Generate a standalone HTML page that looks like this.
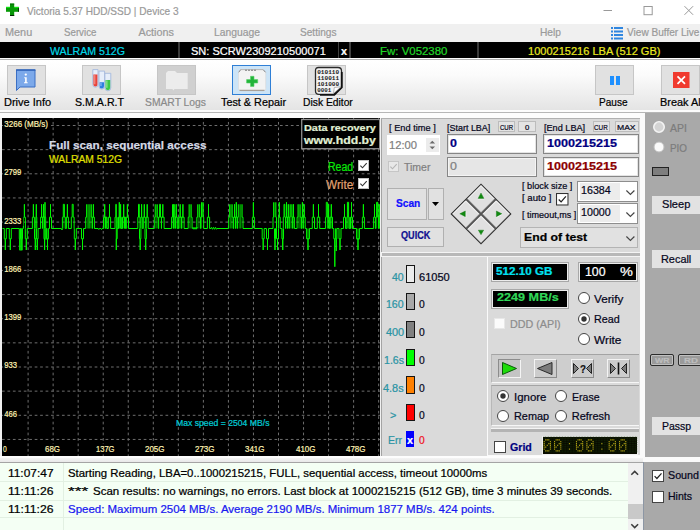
<!DOCTYPE html>
<html>
<head>
<meta charset="utf-8">
<title>Victoria 5.37 HDD/SSD | Device 3</title>
<style>
*{box-sizing:border-box;margin:0;padding:0}
html,body{width:700px;height:530px;overflow:hidden;background:#f0f0f0}
body{position:relative;font-family:"Liberation Sans",sans-serif;font-size:11px;color:#000}
.a{position:absolute}
.t{position:absolute;white-space:nowrap;line-height:1;transform-origin:0 0;-webkit-text-stroke:.22px}
.tb{position:absolute;top:65px;width:38.800px;height:29.800px;background:#e1e1e1;border:1px solid #c6c6c6}
.pn{position:absolute;background:#dadada}
.btn{position:absolute;background:#e1e1e1;border:1px solid #b2b2b2}
.inp{position:absolute;background:#fff;border:1px solid #7a7a7a}
.rad{position:absolute;width:12px;height:12px;border-radius:50%;background:#fff;border:1px solid #4a4a4a}
.rad.on:after{content:"";position:absolute;left:2.500px;top:2.500px;width:5px;height:5px;border-radius:50%;background:#333}
.chk{position:absolute;width:12px;height:12px;background:#fff;border:1px solid #444}
.lg{position:absolute;left:406px;width:9px;height:17px;border:1px solid #111}
.dsp{position:absolute;background:#000;border:1px solid #f0f0f0;outline:1px solid #9c9c9c}
.sb{position:absolute;left:651px;width:60px;height:18px;background:#e1e1e1}
</style>
</head>
<body>
<!-- TITLE BAR -->
<div class="a" style="left:0;top:0;width:700px;height:24px;background:#fff"></div>
<svg class="a" style="left:0;top:0" width="24" height="20"><rect x="10" y="3.600" width="4.200" height="12.300" fill="#079407"/><rect x="6" y="6.900" width="12.900" height="4.900" fill="#089a08"/><rect x="6" y="6.900" width="4" height="1.100" fill="#10e410"/><rect x="14.200" y="6.900" width="4.700" height="1.100" fill="#10e410"/><rect x="10" y="3.600" width="4.200" height="1" fill="#067006"/><rect x="10" y="15" width="4.200" height=".9" fill="#001a00"/><rect x="18.100" y="8" width=".8" height="3.800" fill="#002400"/></svg>
<svg class="a" style="left:601.500px;top:4.800px" width="12" height="12"><path d="M1.500 5.500h8.500" stroke="#999" stroke-width="1"/></svg>
<svg class="a" style="left:641.500px;top:4.500px" width="12" height="12"><rect x="2" y="1.500" width="8.200" height="8.200" fill="none" stroke="#999"/></svg>
<svg class="a" style="left:683px;top:4.500px" width="12" height="12"><path d="M1.500 1.200l8.600 8.600M10.100 1.200l-8.600 8.600" stroke="#999" stroke-width="1"/></svg>
<!-- MENU -->
<div class="a" style="left:0;top:24px;width:700px;height:18px;background:#f0f0f0"></div>
<svg class="a" style="left:611px;top:27px" width="12" height="13"><g fill="#2f86e0"><rect x="0" y="0" width="2" height="2"/><rect x="3" y="0" width="9" height="2"/><rect x="0" y="3.500" width="2" height="2"/><rect x="3" y="3.500" width="9" height="2"/><rect x="0" y="7" width="2" height="2"/><rect x="3" y="7" width="9" height="2"/><rect x="0" y="10.500" width="2" height="2"/><rect x="3" y="10.500" width="9" height="2"/></g></svg>
<!-- INFO BAR -->
<div class="a" style="left:0;top:42.300px;width:700px;height:15.500px;background:#000"></div>
<div class="a" style="left:178px;top:42px;width:2px;height:16px;background:#3a3a3a"></div>
<div class="a" style="left:337.600px;top:42px;width:1.500px;height:16px;background:#404040"></div>
<div class="a" style="left:349.300px;top:42px;width:1.500px;height:16px;background:#404040"></div>
<div class="a" style="left:477px;top:42px;width:2px;height:16px;background:#3a3a3a"></div>
<!-- TOOLBAR -->
<div class="a" style="left:0;top:58px;width:700px;height:60px;background:#fcfcfc"></div>
<div class="a" style="left:0;top:59.200px;width:700px;height:1px;background:#b4b4b4"></div>
<div class="a" style="left:0;top:60.200px;width:700px;height:50.300px;background:linear-gradient(#ffffff,#fbfbfb 30%,#e4e4e4)"></div>
<div class="a" style="left:0;top:111.900px;width:700px;height:1px;background:#b6b6b6"></div>
<div class="tb" style="left:7px"></div>
<div class="tb" style="left:82px"></div>
<div class="tb" style="left:157px;background:#d0d0d0"></div>
<div class="tb" style="left:232px;background:#cce4f7;border:1.500px solid #2f7fd6"></div>
<div class="tb" style="left:307px"></div>
<div class="tb" style="left:595px"></div>
<div class="tb" style="left:661px"></div>

<!-- GRAPH -->
<div class="a" id="graph" style="left:2.400px;top:118.300px;width:377.300px;height:337.500px;background:#000;overflow:hidden">
  <svg class="a" style="left:-0.400px;top:-0.300px" width="378" height="338" id="gsvg"><path d="M0 7.50H378M0 31.65H378M0 55.80H378M0 79.95H378M0 104.10H378M0 128.25H378M0 152.40H378M0 176.55H378M0 200.70H378M0 224.85H378M0 249.00H378M0 273.15H378M0 297.30H378M0 321.45H378" stroke="#6e6e6e" stroke-width="1" stroke-dasharray="2.7 2.75" fill="none"/>
<path d="M26.10 0V338M51.14 0V338M76.18 0V338M101.22 0V338M126.26 0V338M151.30 0V338M176.34 0V338M201.38 0V338M226.42 0V338M251.46 0V338M276.50 0V338M301.54 0V338M326.58 0V338M351.62 0V338M376.66 0V338" stroke="#6e6e6e" stroke-width="1" stroke-dasharray="2.7 2.75" stroke-dashoffset="1.5" fill="none"/>
<rect x="17.40" y="110.50" width="3.00" height="22.50" fill="#00c800" opacity="0.6"/>
<rect x="41.80" y="110.50" width="4.50" height="11.50" fill="#00c800" opacity="0.5"/>
<rect x="61.30" y="86.30" width="1.10" height="24.20" fill="#00c800" opacity="0.5"/>
<rect x="84.60" y="86.30" width="4.70" height="24.20" fill="#00c800" opacity="0.385"/>
<rect x="101.50" y="99.20" width="3.50" height="11.30" fill="#00c800" opacity="0.5"/>
<rect x="114.80" y="99.20" width="2.20" height="11.30" fill="#00c800" opacity="0.9"/>
<rect x="118.00" y="99.20" width="5.50" height="11.30" fill="#00c800" opacity="0.5"/>
<rect x="153.20" y="86.30" width="2.10" height="24.20" fill="#00c800" opacity="0.55"/>
<rect x="157.60" y="86.30" width="0.90" height="12.90" fill="#00c800" opacity="0.9"/>
<rect x="170.50" y="86.30" width="2.30" height="24.20" fill="#00c800" opacity="0.385"/>
<rect x="176.50" y="99.20" width="3.50" height="11.30" fill="#00c800" opacity="0.5"/>
<rect x="187.10" y="86.30" width="2.10" height="24.20" fill="#00c800" opacity="0.5"/>
<rect x="195.70" y="86.30" width="2.00" height="24.20" fill="#00c800" opacity="0.45"/>
<rect x="199.50" y="84.30" width="1.70" height="14.90" fill="#00c800" opacity="0.8"/>
<rect x="227.60" y="86.30" width="2.60" height="24.20" fill="#00c800" opacity="0.35"/>
<rect x="236.30" y="86.30" width="3.80" height="24.20" fill="#00c800" opacity="0.35"/>
<rect x="271.60" y="84.30" width="2.30" height="14.90" fill="#00c800" opacity="0.55"/>
<rect x="280.00" y="110.50" width="1.40" height="21.50" fill="#00c800" opacity="0.4"/>
<rect x="288.10" y="86.30" width="1.90" height="24.20" fill="#00c800" opacity="0.5"/>
<rect x="296.00" y="86.30" width="2.20" height="24.20" fill="#00c800" opacity="0.5"/>
<rect x="304.60" y="110.50" width="2.90" height="10.30" fill="#00c800" opacity="0.55"/>
<rect x="327.30" y="99.20" width="3.10" height="11.30" fill="#00c800" opacity="0.6"/>
<rect x="345.40" y="84.30" width="1.20" height="26.20" fill="#00c800" opacity="0.9"/>
<rect x="346.80" y="99.20" width="3.60" height="11.30" fill="#00c800" opacity="0.55"/>
<rect x="354.60" y="110.50" width="2.80" height="11.50" fill="#00c800" opacity="0.55"/>
<rect x="374.60" y="84.30" width="1.20" height="14.90" fill="#00c800" opacity="0.9"/>
<path d="M86.17 86.30V110.50M87.73 86.30V110.50M228.90 86.30V110.50M238.20 86.30V110.50" stroke="#00f000" stroke-width=".8" fill="none" opacity=".75"/>
<path d="M0.50 110.50H2.30V120.80H3.30V132.00V120.80H4.30V110.50H7.30V120.80H8.30V132.00V120.80H9.30V110.50H17.30V120.80H17.90V132.00V120.80H18.50V110.50H19.30V120.80H19.90V132.00V120.80H20.50V110.50H21.40V99.20H22.40V86.30V99.20H23.40V110.50M23.30 110.50V120.80H24.30V132.00V120.80H25.30V110.50H30.40V99.20H31.40V86.30V99.20H32.40V110.50H32.50V120.80H33.30V132.00V120.80H34.10V110.50M33.80 110.50V99.20H34.30V86.30V99.20H34.80V110.50M34.50 110.50V120.80H35.30V132.00V120.80H36.10V110.50H38.60V99.20H39.60V86.30V99.20H40.60V110.50H40.70V99.20H41.50V86.30V99.20H42.30V110.50M42.00 110.50V120.80H42.60V132.00V120.80H43.20V110.50M42.30 110.50V99.20H43.00V84.30V99.20H43.70V110.50H44.60V120.80H45.50V132.00V120.80H46.40V110.50H47.50V99.20H48.50V86.30V99.20H49.50V110.50H59.40L60.00 112.00L60.60 110.50M60.40 110.50V99.20H61.30V86.30H62.40V99.20H63.30V110.50H64.40V99.20H65.40V86.30V99.20H66.40V110.50H69.30V99.20H70.20V86.30H71.20V99.20H72.10V110.50H72.30V120.80H73.30V132.00V120.80H74.30V110.50H79.50V120.80H80.50V132.00V120.80H81.50V110.50H83.70V99.20H84.60V86.30M89.30 86.30V99.20H90.20V110.50H90.40V99.20H91.40V86.30V99.20H92.40V110.50H96.20L96.80 111.50L97.40 110.50H98.90L99.50 111.50L100.10 110.50H101.50V99.20H102.70V86.30V99.20H103.90V110.50M103.60 110.50V99.20H104.30V99.20V99.20H105.00V110.50H106.40V99.20H107.50V86.30V99.20H108.60V110.50H113.00V99.20H113.80V86.30H114.30V132.00V120.80H115.20V110.50H116.50V99.20H117.30V84.30V99.20H118.10V110.50M118.00 110.50V99.20H118.60V86.30V99.20H119.20V110.50H120.50V99.20H121.70V86.30V99.20H122.90V110.50M122.70 110.50V99.20H123.20V99.20V99.20H123.70V110.50H124.30V99.20H125.40V86.30V99.20H126.50V110.50H135.80V99.20H136.50V86.30H137.30V99.20H138.00V110.50M137.50 110.50V120.80H138.20V132.00V120.80H138.90V110.50H138.90V99.20H139.60V86.30V99.20H140.30V110.50H141.30V99.20H142.30V86.30V99.20H143.30V110.50M143.00 110.50V120.80H143.70V132.00V120.80H144.40V110.50M144.20 110.50V99.20H145.20V86.30V99.20H146.20V110.50H152.30V99.20H153.20V86.30M155.30 86.30V99.20H156.20V110.50H156.70V99.20H157.60V86.30H158.50V99.20H159.40V110.50H159.50V99.20H160.80V86.30V99.20H162.10V110.50H169.60V99.20H170.50V86.30M172.80 86.30V99.20H173.70V110.50M171.40 110.50V99.20H171.70V86.30V99.20H172.00V110.50M173.30 110.50V99.20H174.30V86.30V99.20H175.30V110.50H176.70V99.20H178.20V86.30V99.20H179.70V110.50H179.70V99.20H180.90V86.30V99.20H182.10V110.50H186.20V99.20H187.10V86.30M189.20 86.30V99.20H190.10V110.50H190.50L191.00 109.30L192.00 111.30L193.00 109.30L194.00 111.30L195.00 109.30L195.00 110.50M194.80 110.50V99.20H195.70V86.30M197.70 86.30V99.20H198.60V110.50H199.00V99.20H199.50V84.30M201.20 84.30V99.20H201.70V110.50H205.40V99.20H206.50V86.30V99.20H207.60V110.50H209.00L209.50 109.30L210.50 111.30L211.50 109.30L212.50 111.30L213.50 109.30L214.50 111.30L215.00 110.50H226.70V99.20H227.60V86.30M230.20 86.30V99.20H231.10V110.50H231.60V99.20H232.50V86.30V99.20H233.40V110.50H233.50V99.20H234.30V84.30V99.20H235.10V110.50H235.40V99.20H236.30V86.30M240.10 86.30V99.20H241.00V110.50H250.40V99.20H251.40V84.30V99.20H252.40V110.50H260.20V120.80H261.20V132.00V120.80H262.20V110.50H264.50V120.80H265.50V132.00V120.80H266.50V110.50H271.00V99.20H271.60V84.30M273.90 84.30V99.20H274.50V110.50M272.50 110.50V120.80H273.00V132.00V120.80H273.50V110.50H274.50V120.80H275.50V132.00V120.80H276.50V110.50M276.40 110.50V99.20H277.30V84.30V99.20H278.20V110.50H279.90V120.80H280.70V132.00V120.80H281.50V110.50M281.30 110.50V99.20H282.00V86.30H282.80V99.20H283.50V110.50H283.70V99.20H284.50V84.30V99.20H285.30V110.50H285.50V99.20H286.30V86.30V99.20H287.10V110.50H287.20V99.20H288.10V86.30M290.00 86.30V99.20H290.90V110.50M290.60 110.50V99.20H291.50V86.30V99.20H292.40V110.50H295.10V99.20H296.00V86.30M298.20 86.30V99.20H299.10V110.50H299.60V99.20H300.40V84.30V99.20H301.20V110.50H301.20V99.20H302.20V86.30V99.20H303.20V110.50H304.60V120.80H306.00V132.00V120.80H307.40V110.50H310.30V99.20H311.40V86.30V99.20H312.50V110.50H315.30V99.20H316.50V86.30V99.20H317.70V110.50H323.60V99.20H324.30V84.30H325.40V99.20H326.10V110.50M325.90 110.50V99.20H326.60V86.30V99.20H327.30V110.50H328.10V99.20H329.30V86.30V99.20H330.50V110.50H331.80V120.80H332.80V148.70V120.80H333.80V110.50M333.70 110.50V120.80H334.30V133.00V120.80H334.90V110.50H337.00V120.80H338.00V132.00V120.80H339.00V110.50H341.50V99.20H342.50V86.30V99.20H343.50V110.50H344.80V99.20H345.40V84.30H346.60V99.20H347.20V110.50H348.50V99.20H349.50V84.30V99.20H350.50V110.50H354.60V120.80H356.00V132.00V120.80H357.40V110.50H360.40V99.20H361.40V86.30V99.20H362.40V110.50H371.60V99.20H372.50V86.30V99.20H373.40V110.50H374.00V99.20H374.60V84.30H375.80V99.20H376.40V110.50H376.70V99.20H377.20V86.30V99.20H377.70V110.50H378" stroke="#00f800" stroke-width="1" fill="none" stroke-linejoin="miter"/>
<rect x="299.7" y="1.5" width="78" height="29.200" fill="#000" stroke="#8e8e8e" stroke-width="1.300"/></svg>
</div>
<div class="a" style="left:0;top:456px;width:700px;height:2px;background:#fdfdfd"></div>
<div class="a" style="left:0;top:458px;width:645px;height:4px;background:linear-gradient(#f4f4f4,#e8e8e8)"></div>
<div class="a" style="left:0;top:461.700px;width:645px;height:1px;background:#a4a4a4"></div>
<!-- SCAN PANEL -->
<div class="pn" id="p1" style="left:381px;top:118.300px;width:260px;height:133.400px;border-left:1px solid #a4a4a4;border-top:1px solid #b0b0b0"></div>
<div class="a" style="left:382px;top:252px;width:259px;height:5px;background:#b8b8b8;border-top:1px solid #f4f4f4;border-bottom:1px solid #f4f4f4"></div>
<div class="a" style="left:381px;top:257px;width:260px;height:199px;background:#fafafa"></div>
<div class="pn" id="p2" style="left:381px;top:257px;width:105.900px;height:198.500px;border-left:1px solid #a4a4a4"></div>
<div class="pn" id="p3" style="left:488.300px;top:257px;width:152.400px;height:197.600px"></div>
<div class="a" style="left:640.400px;top:113px;width:4.200px;height:345px;background:#fbfbfb"></div>
<!-- SIDE PANEL -->
<div class="a" id="side" style="left:644.500px;top:113px;width:56px;height:344px;background:#a9a9a9"></div>
<div class="a" style="left:643px;top:457px;width:57px;height:5.300px;background:#fafafa"></div>
<div class="a" id="side2" style="left:643.400px;top:462.300px;width:57px;height:68px;background:#a9a9a9;border-left:1px solid #8c96a4"></div>
<!-- LOG -->
<div class="a" id="log" style="left:0;top:462.700px;width:643px;height:68px;background:#f4fff4"></div>
<svg class="a" style="left:358px;top:159.8px" width="11" height="11" viewBox="0 0 12 12"><rect x=".5" y=".5" width="11" height="11" fill="#fff" stroke="#c8c8c8"/><path d="M2.600 6.200L4.900 8.500L9.500 3.300" fill="none" stroke="#333" stroke-width="1.200"/></svg>
<svg class="a" style="left:358px;top:177.8px" width="11" height="11" viewBox="0 0 12 12"><rect x=".5" y=".5" width="11" height="11" fill="#fff" stroke="#c8c8c8"/><path d="M2.600 6.200L4.900 8.500L9.500 3.300" fill="none" stroke="#333" stroke-width="1.200"/></svg>
<div class="a" style="left:386.8px;top:134.8px;width:53.4px;height:20px;background:#fff;"></div>
<div class="a" style="left:425.5px;top:137.5px;width:13px;height:7px;background:#ececec;"></div>
<div class="a" style="left:425.5px;top:145px;width:13px;height:7px;background:#ececec;"></div>
<svg class="a" style="left:428px;top:138px" width="9" height="14"><path d="M1.500 5.500L4.300 2.700L7.100 5.500zM1.500 8.500L4.300 11.300L7.100 8.500z" fill="#6a6a6a"/></svg>
<svg class="a" style="left:388px;top:161px" width="11" height="11" viewBox="0 0 12 12"><rect x=".5" y=".5" width="11" height="11" fill="#e8e8e8" stroke="#c4c4c4"/><path d="M2.600 6.200L4.900 8.500L9.500 3.300" fill="none" stroke="#b4b4b4" stroke-width="1.200"/></svg>
<div class="a" style="left:498px;top:121px;width:16.5px;height:11px;background:#e4e4e4;border:1px solid #bcbcbc;"></div>
<div class="a" style="left:518px;top:121px;width:18px;height:11px;background:#e4e4e4;border:1px solid #bcbcbc;"></div>
<div class="a" style="left:593px;top:121px;width:16.5px;height:11px;background:#e4e4e4;border:1px solid #bcbcbc;"></div>
<div class="a" style="left:615px;top:121px;width:23.5px;height:11px;background:#e4e4e4;border:1px solid #bcbcbc;"></div>
<div class="a" style="left:447px;top:134px;width:90px;height:19.5px;background:#fff;border:1px solid #868686;box-shadow:inset 0 0 0 1px #e4e4e4;"></div>
<div class="a" style="left:447px;top:157px;width:90px;height:19.5px;background:#e6e6e6;border:1px solid #868686;box-shadow:inset 0 0 0 1px #f4f4f4;"></div>
<div class="a" style="left:543px;top:134px;width:95.5px;height:19.5px;background:#fff;border:1px solid #868686;box-shadow:inset 0 0 0 1px #e4e4e4;"></div>
<div class="a" style="left:543px;top:157px;width:95.5px;height:19.5px;background:#fff;border:1px solid #868686;box-shadow:inset 0 0 0 1px #e4e4e4;"></div>
<div class="a" style="left:387px;top:188px;width:39.5px;height:31.5px;background:#e1e1e1;border:1px solid #b0b0b0;"></div>
<div class="a" style="left:428px;top:188px;width:15.5px;height:31.5px;background:#e1e1e1;border:1px solid #b0b0b0;"></div>
<svg class="a" style="left:431px;top:201px" width="10" height="6"><path d="M1 1h7L4.500 5z" fill="#000"/></svg>
<div class="a" style="left:387px;top:226.5px;width:56.5px;height:20px;background:#e1e1e1;border:1px solid #b0b0b0;"></div>
<svg class="a" style="left:448.600px;top:181.600px" width="64" height="64" viewBox="-32 -32 64 64">
<g transform="rotate(45)"><rect x="-21.100" y="-21.100" width="42.200" height="42.200" fill="#6c6c6c" stroke="#2e2e2e" stroke-width="1"/>
<rect x="-20.300" y="-20.300" width="19.100" height="19.100" fill="#e0e0e0"/><rect x="1.300" y="-20.300" width="19" height="19.100" fill="#e0e0e0"/>
<rect x="-20.300" y="1.300" width="19.100" height="19" fill="#e0e0e0"/><rect x="1.300" y="1.300" width="19" height="19" fill="#e0e0e0"/>
<path d="M-20 -1.500V-20H-1.500M1.600 -1.500V-20H20M-20 20V1.600H-1.500M1.600 20V1.600H20" fill="none" stroke="#fafafa" stroke-width=".9"/>
<path d="M-21 0H21M0 -21V21" stroke="#505050" stroke-width=".8"/></g>
<g fill="#fff"><path d="M0 -20.700L3.400 -14.800H-3.400z"/><path d="M0 21.300L3 16.500H-3z"/><path d="M-20.600 .6L-14.800 -2.800V3.800z"/><path d="M21.300 .6L15.500 -2.800V3.800z"/></g>
<g fill="#128a12" stroke="#0b6a0b" stroke-width=".4"><path d="M0 -21L2.900 -15.600H-2.900z"/><path d="M0 20.800L2.700 16.200H-2.700z"/><path d="M-21.200 -.2L-15.700 -3V2.700z"/><path d="M20.800 -.2L15.400 -3V2.700z"/></g></svg>
<svg class="a" style="left:556px;top:193px" width="12.5" height="12.5" viewBox="0 0 12 12"><rect x=".5" y=".5" width="11" height="11" fill="#fff" stroke="#333"/><path d="M2.600 6.200L4.900 8.500L9.500 3.300" fill="none" stroke="#222" stroke-width="1.200"/></svg>
<div class="a" style="left:577px;top:181px;width:61.3px;height:20.5px;background:#fff;border:1px solid #8e8e8e;"></div>
<div class="a" style="left:579.5px;top:183px;width:40.5px;height:16.5px;background:#ececec;"></div>
<svg class="a" style="left:625px;top:188.7px" width="12" height="8"><path d="M1.400 1.500L5.400 5.500L9.400 1.500" fill="none" stroke="#444" stroke-width="1.150"/></svg>
<div class="a" style="left:577px;top:203px;width:61.3px;height:20.5px;background:#fff;border:1px solid #8e8e8e;"></div>
<div class="a" style="left:579.5px;top:205px;width:40.5px;height:16.5px;background:#ececec;"></div>
<svg class="a" style="left:625px;top:210.7px" width="12" height="8"><path d="M1.400 1.500L5.400 5.500L9.400 1.500" fill="none" stroke="#444" stroke-width="1.150"/></svg>
<div class="a" style="left:520px;top:227px;width:118.3px;height:20.5px;background:#e1e1e1;border:1px solid #b4b4b4;"></div>
<svg class="a" style="left:625px;top:234.700px" width="12" height="8"><path d="M1.400 1.500L5.400 5.500L9.400 1.500" fill="none" stroke="#444" stroke-width="1.150"/></svg>
<div class="a" style="left:406.1px;top:265.3px;width:9px;height:17.4px;background:#ececec;border:1px solid #151515;"></div>
<div class="a" style="left:406.1px;top:293.05px;width:9px;height:17.4px;background:#a8a8a8;border:1px solid #151515;"></div>
<div class="a" style="left:406.1px;top:320.8px;width:9px;height:17.4px;background:#808080;border:1px solid #151515;"></div>
<div class="a" style="left:406.1px;top:348.55px;width:9px;height:17.4px;background:#00ff00;border:1px solid #151515;"></div>
<div class="a" style="left:406.1px;top:376.3px;width:9px;height:17.4px;background:#ff8000;border:1px solid #151515;"></div>
<div class="a" style="left:406.1px;top:404.05px;width:9px;height:17.4px;background:#ff0000;border:1px solid #151515;"></div>
<div class="a" style="left:405.9px;top:430.8px;width:8.1px;height:16px;background:#0000ff;"></div>
<div class="a" style="left:492px;top:263px;width:76px;height:17.5px;background:#000;border:1px solid #ececec;outline:1px solid #a8a8a8;"></div>
<div class="a" style="left:492px;top:290px;width:76px;height:17.5px;background:#000;border:1px solid #ececec;outline:1px solid #a8a8a8;"></div>
<div class="a" style="left:579px;top:263px;width:58px;height:17.5px;background:#000;border:1px solid #ececec;outline:1px solid #a8a8a8;"></div>
<svg class="a" style="left:577px;top:291px" width="14" height="14"><circle cx="7" cy="7" r="5.5" fill="#fff" stroke="#444" stroke-width="1"/></svg>
<svg class="a" style="left:577px;top:311.6px" width="14" height="14"><circle cx="7" cy="7" r="5.5" fill="#fff" stroke="#444" stroke-width="1"/><circle cx="7" cy="7" r="2.700" fill="#333"/></svg>
<svg class="a" style="left:577px;top:332px" width="14" height="14"><circle cx="7" cy="7" r="5.5" fill="#fff" stroke="#444" stroke-width="1"/></svg>
<svg class="a" style="left:494px;top:318px" width="11" height="11" viewBox="0 0 12 12"><rect x=".5" y=".5" width="11" height="11" fill="#fbfbfb" stroke="#e8e8e8"/></svg>
<div class="a" style="left:491px;top:354.3px;width:147.8px;height:28.5px;background:#cecece;border-top:1px solid #a4a4a4;border-left:1px solid #b8b8b8;border-bottom:1.400px solid #f6f6f6;"></div>
<div class="a" style="left:498px;top:359px;width:23px;height:18.5px;background:#c4c4c4;border:1px solid #8c8c8c;border-right-color:#f4f4f4;border-bottom-color:#f4f4f4;"></div>
<div class="a" style="left:534px;top:359px;width:23px;height:18.5px;background:#cccccc;border:1px solid #f4f4f4;border-right-color:#8c8c8c;border-bottom-color:#8c8c8c;"></div>
<div class="a" style="left:571px;top:359px;width:23px;height:18.5px;background:#cccccc;border:1px solid #f4f4f4;border-right-color:#8c8c8c;border-bottom-color:#8c8c8c;"></div>
<div class="a" style="left:607px;top:359px;width:23px;height:18.5px;background:#cccccc;border:1px solid #f4f4f4;border-right-color:#8c8c8c;border-bottom-color:#8c8c8c;"></div>
<svg class="a" style="left:498px;top:359px" width="23" height="19"><path d="M4.500 3.500L18.500 9.500L4.500 15.500z" fill="#1edc0a" stroke="#0a5a0a" stroke-width="1"/></svg>
<svg class="a" style="left:534px;top:359px" width="23" height="19"><path d="M18 3.500L3.500 9.500L18 15.500z" fill="#7c7c7c" stroke="#2a2a2a" stroke-width="1"/></svg>
<svg class="a" style="left:571px;top:359px" width="23" height="19"><path d="M2.500 4.500L7.500 9.500L2.500 14.500z" fill="#7c7c7c" stroke="#222" stroke-width="1"/><path d="M20.500 4.500L15.500 9.500L20.500 14.500z" fill="#7c7c7c" stroke="#222" stroke-width="1"/></svg>
<svg class="a" style="left:607px;top:359px" width="23" height="19"><path d="M3.500 4.500L8.500 9.500L3.500 14.500z" fill="#7c7c7c" stroke="#222" stroke-width="1"/><path d="M19.500 4.500L14.500 9.500L19.500 14.500z" fill="#7c7c7c" stroke="#222" stroke-width="1"/><path d="M11.500 3.500V15.500" stroke="#111" stroke-width="1.600"/></svg>
<div class="a" style="left:491px;top:385.3px;width:147.8px;height:41px;background:#cecece;border-top:1px solid #a4a4a4;border-left:1px solid #b8b8b8;border-bottom:1.400px solid #f6f6f6;"></div>
<svg class="a" style="left:496px;top:389px" width="14" height="14"><circle cx="7" cy="7" r="5.5" fill="#fff" stroke="#444" stroke-width="1"/><circle cx="7" cy="7" r="2.700" fill="#333"/></svg>
<svg class="a" style="left:496px;top:409px" width="14" height="14"><circle cx="7" cy="7" r="5.5" fill="#fff" stroke="#444" stroke-width="1"/></svg>
<svg class="a" style="left:554px;top:389px" width="14" height="14"><circle cx="7" cy="7" r="5.5" fill="#fff" stroke="#444" stroke-width="1"/></svg>
<svg class="a" style="left:554px;top:409px" width="14" height="14"><circle cx="7" cy="7" r="5.5" fill="#fff" stroke="#444" stroke-width="1"/></svg>
<div class="a" style="left:491px;top:428px;width:147.5px;height:4px;background:#b4b4b4;border-top:1px solid #f4f4f4;"></div>
<svg class="a" style="left:494px;top:440.5px" width="12" height="12" viewBox="0 0 12 12"><rect x=".5" y=".5" width="11" height="11" fill="#fff" stroke="#444"/></svg>
<div class="a" style="left:542px;top:436px;width:95.5px;height:18.5px;background:#0a0c00;border:1px solid #f0f0f0;"></div>
<svg class="a" style="left:652px;top:120px" width="14" height="14"><circle cx="7" cy="7" r="5" fill="#d4d4d4" stroke="#c8c8c8" stroke-width="1"/></svg>
<svg class="a" style="left:652px;top:140px" width="14" height="14"><circle cx="7" cy="7" r="5" fill="#fbfbfb" stroke="#c0c0c0" stroke-width="1"/></svg>
<svg class="a" style="left:653px;top:121px" width="12" height="12"><circle cx="6" cy="6" r="5.200" fill="none" stroke="#f4f4f4" stroke-width="1.600"/></svg>
<div class="a" style="left:652px;top:167px;width:17px;height:8.5px;background:#7e7e7e;border:1px solid #222;"></div>
<div class="a" style="left:651.5px;top:196px;width:48.5px;height:18px;background:#e2e2e2;"></div>
<div class="a" style="left:651.5px;top:250px;width:48.5px;height:18px;background:#e2e2e2;"></div>
<div class="a" style="left:651.5px;top:417px;width:48.5px;height:18px;background:#e2e2e2;"></div>
<div class="a" style="left:650px;top:354px;width:24px;height:11.5px;background:#9a9a9a;border:1px solid #2c2c2c;border-radius:2px;box-shadow:inset 0 0 0 1px #c0c0c0;"></div>
<div class="a" style="left:678px;top:354px;width:25px;height:11.5px;background:#9a9a9a;border:1px solid #2c2c2c;border-radius:2px;box-shadow:inset 0 0 0 1px #c0c0c0;"></div>
<svg class="a" style="left:651.8px;top:469.8px" width="12" height="12" viewBox="0 0 12 12"><rect x=".5" y=".5" width="11" height="11" fill="#fff" stroke="#444"/><path d="M2.600 6.200L4.900 8.500L9.500 3.300" fill="none" stroke="#222" stroke-width="1.200"/></svg>
<svg class="a" style="left:651.8px;top:490.8px" width="12" height="12" viewBox="0 0 12 12"><rect x=".5" y=".5" width="11" height="11" fill="#fff" stroke="#444"/></svg>
<div class="a" style="left:0px;top:481.4px;width:628px;height:1px;background:#e2f0e2;"></div>
<div class="a" style="left:0px;top:499.5px;width:628px;height:1px;background:#e2f0e2;"></div>
<div class="a" style="left:0px;top:517px;width:628px;height:1px;background:#e2f0e2;"></div>
<div class="a" style="left:62.5px;top:463px;width:1px;height:67px;background:#e2f0e2;"></div>
<div class="a" style="left:628px;top:462.7px;width:15.2px;height:67.3px;background:#f0f0f0;"></div>
<div class="a" style="left:628px;top:504px;width:15.2px;height:14.5px;background:#c9c9c9;"></div>
<svg class="a" style="left:629.300px;top:468.600px" width="12" height="8"><path d="M2.300 5.800L5.700 2.400L9.100 5.800" fill="none" stroke="#3c3c3c" stroke-width="1.500"/></svg>
<svg class="a" style="left:629.300px;top:522px" width="12" height="8"><path d="M2.300 2.200L5.700 5.600L9.100 2.200" fill="none" stroke="#3c3c3c" stroke-width="1.500"/></svg>
<svg class="a" style="left:15px;top:68px" width="22" height="24" viewBox="0 0 22 24"><path d="M1.500 2H20V19H5L1.500 22.500z" fill="#7ca9ea" stroke="#3b6fc4" stroke-width="1"/><path d="M1 2H20.500" stroke="#2f62b8" stroke-width="1.400"/>
<circle cx="10.800" cy="6.600" r="1.150" fill="#fff"/><path d="M9.300 9.300H11.700V14.300H12.700V15.300H9V14.300H10.100V10.300H9.300z" fill="#fff"/></svg>
<svg class="a" style="left:0;top:0" width="120" height="95"><path d="M92.8 69.6H98V84.6A2.6 2.6 0 0 1 92.8 84.6z" fill="#e6eefa" stroke="#a4b8dc" stroke-width=".9"/><path d="M93.4 74.6H97.4V84.6A2 2 0 0 1 93.4 84.6z" fill="#e8433a"/><rect x="94.1" y="75.1" width="1.300" height="9.1" fill="#f8a8a0" opacity=".7"/><path d="M99 71.1H104.6V86.3A2.8 2.8 0 0 1 99 86.3z" fill="#e6eefa" stroke="#a4b8dc" stroke-width=".9"/><path d="M99.6 82.3H104V86.3A2.2 2.2 0 0 1 99.6 86.3z" fill="#2d7fe0"/><rect x="100.3" y="82.8" width="1.300" height="3.3" fill="#a8d0f8" opacity=".7"/><path d="M104.9 73.3H110.8V87.85A2.95 2.95 0 0 1 104.9 87.85z" fill="#e6eefa" stroke="#a4b8dc" stroke-width=".9"/><path d="M105.5 79.9H110.2V87.85A2.35 2.35 0 0 1 105.5 87.85z" fill="#3cc84a"/><rect x="106.2" y="80.4" width="1.300" height="7.4" fill="#b0f0b0" opacity=".7"/></svg>
<svg class="a" style="left:165px;top:70px" width="24" height="22"><path d="M1 3L3 1.100H10L12 3H22.700V19.100H9.500L8.200 20.600L7.500 19.100H1z" fill="#ececec"/></svg>
<svg class="a" style="left:237px;top:68px" width="30" height="24" viewBox="0 0 30 24"><path d="M3.500 1.600H26.200L28.700 4.500V20.500Q28.700 22.700 26.500 22.700H3.500Q1.500 22.700 1.500 20.500V4.500z" fill="#f3f3f3" stroke="#d8d8d8" stroke-width=".6"/>
<path d="M3.300 1.600H26.300" stroke="#b8b8b8" stroke-width="1"/><path d="M8 2.300H20" stroke="#9a9a9a" stroke-width="1.400" stroke-dasharray="2 1"/><path d="M1.700 4.300L3.600 1.800M28.500 4.300L26.300 1.800" stroke="#8a8a8a" stroke-width="1"/>
<path d="M2.500 22.400H27.500" stroke="#a8a098" stroke-width="1.300"/>
<path d="M13.500 8.300H17V11.600H20.700V15H17V18.400H13.500V15H9.600V11.600H13.500z" fill="#22b43a" stroke="#58d068" stroke-width=".6"/></svg>
<svg class="a" style="left:314px;top:66px" width="30" height="30" viewBox="0 0 30 30"><path d="M4.500 1.500H24Q27.500 1.500 27.500 5V21L20 28.300H5Q1.500 28.300 1.500 25V4.500Q1.500 1.500 4.500 1.500z" fill="#f2f2f2" stroke="#2a2a2a" stroke-width="1.300"/>
<path d="M27.800 6V21.300L20.300 28.800H6" fill="none" stroke="#111" stroke-width="1.800"/><path d="M19.500 27.500L20.300 21.500L27 20.800z" fill="#fff" stroke="#888" stroke-width=".6"/>
<g font-family="Liberation Mono,monospace" font-size="5.800" font-weight="bold" fill="#1a1a1a" textLength="22"><text x="3.200" y="8.300" textLength="22" lengthAdjust="spacingAndGlyphs">010110</text><text x="3.200" y="14.300" textLength="22" lengthAdjust="spacingAndGlyphs">110011</text><text x="3.200" y="20.200" textLength="22" lengthAdjust="spacingAndGlyphs">101000</text><text x="3.200" y="26" textLength="14" lengthAdjust="spacingAndGlyphs">0001</text></g></svg>
<div class="a" style="left:610.4px;top:75.700px;width:3.600px;height:9.200px;background:#1e90ff"></div><div class="a" style="left:616px;top:75.700px;width:3.600px;height:9.200px;background:#1e90ff"></div>
<svg class="a" style="left:673px;top:72.300px" width="17" height="16.500"><rect width="16.500" height="16" fill="#f03a2e"/><path d="M4.500 4.300L12 11.800M12 4.300L4.500 11.800" stroke="#fff" stroke-width="1.700"/></svg>
<svg class="a" style="left:0;top:0" width="700" height="530"><path d="M543.50 437.00h.9M545.05 437.00h.9M546.60 437.00h.9M548.15 437.00h.9M549.70 437.00h.9M551.25 437.00h.9M552.80 437.00h.9M554.35 437.00h.9M555.90 437.00h.9M557.45 437.00h.9M559.00 437.00h.9M560.55 437.00h.9M562.10 437.00h.9M563.65 437.00h.9M565.20 437.00h.9M566.75 437.00h.9M568.30 437.00h.9M569.85 437.00h.9M571.40 437.00h.9M572.95 437.00h.9M574.50 437.00h.9M576.05 437.00h.9M577.60 437.00h.9M579.15 437.00h.9M580.70 437.00h.9M582.25 437.00h.9M583.80 437.00h.9M585.35 437.00h.9M586.90 437.00h.9M588.45 437.00h.9M590.00 437.00h.9M591.55 437.00h.9M593.10 437.00h.9M594.65 437.00h.9M596.20 437.00h.9M597.75 437.00h.9M599.30 437.00h.9M600.85 437.00h.9M602.40 437.00h.9M603.95 437.00h.9M605.50 437.00h.9M607.05 437.00h.9M608.60 437.00h.9M610.15 437.00h.9M611.70 437.00h.9M613.25 437.00h.9M614.80 437.00h.9M616.35 437.00h.9M617.90 437.00h.9M619.45 437.00h.9M621.00 437.00h.9M622.55 437.00h.9M624.10 437.00h.9M625.65 437.00h.9M627.20 437.00h.9M628.75 437.00h.9M630.30 437.00h.9M631.85 437.00h.9M633.40 437.00h.9M634.95 437.00h.9M636.50 437.00h.9M543.50 438.85h.9M545.05 438.85h.9M546.60 438.85h.9M548.15 438.85h.9M549.70 438.85h.9M551.25 438.85h.9M552.80 438.85h.9M554.35 438.85h.9M555.90 438.85h.9M557.45 438.85h.9M559.00 438.85h.9M560.55 438.85h.9M562.10 438.85h.9M563.65 438.85h.9M565.20 438.85h.9M566.75 438.85h.9M568.30 438.85h.9M569.85 438.85h.9M571.40 438.85h.9M572.95 438.85h.9M574.50 438.85h.9M576.05 438.85h.9M577.60 438.85h.9M579.15 438.85h.9M580.70 438.85h.9M582.25 438.85h.9M583.80 438.85h.9M585.35 438.85h.9M586.90 438.85h.9M588.45 438.85h.9M590.00 438.85h.9M591.55 438.85h.9M593.10 438.85h.9M594.65 438.85h.9M596.20 438.85h.9M597.75 438.85h.9M599.30 438.85h.9M600.85 438.85h.9M602.40 438.85h.9M603.95 438.85h.9M605.50 438.85h.9M607.05 438.85h.9M608.60 438.85h.9M610.15 438.85h.9M611.70 438.85h.9M613.25 438.85h.9M614.80 438.85h.9M616.35 438.85h.9M617.90 438.85h.9M619.45 438.85h.9M621.00 438.85h.9M622.55 438.85h.9M624.10 438.85h.9M625.65 438.85h.9M627.20 438.85h.9M628.75 438.85h.9M630.30 438.85h.9M631.85 438.85h.9M633.40 438.85h.9M634.95 438.85h.9M636.50 438.85h.9M543.50 440.70h.9M545.05 440.70h.9M546.60 440.70h.9M548.15 440.70h.9M549.70 440.70h.9M551.25 440.70h.9M552.80 440.70h.9M554.35 440.70h.9M555.90 440.70h.9M557.45 440.70h.9M559.00 440.70h.9M560.55 440.70h.9M562.10 440.70h.9M563.65 440.70h.9M565.20 440.70h.9M566.75 440.70h.9M568.30 440.70h.9M569.85 440.70h.9M571.40 440.70h.9M572.95 440.70h.9M574.50 440.70h.9M576.05 440.70h.9M577.60 440.70h.9M579.15 440.70h.9M580.70 440.70h.9M582.25 440.70h.9M583.80 440.70h.9M585.35 440.70h.9M586.90 440.70h.9M588.45 440.70h.9M590.00 440.70h.9M591.55 440.70h.9M593.10 440.70h.9M594.65 440.70h.9M596.20 440.70h.9M597.75 440.70h.9M599.30 440.70h.9M600.85 440.70h.9M602.40 440.70h.9M603.95 440.70h.9M605.50 440.70h.9M607.05 440.70h.9M608.60 440.70h.9M610.15 440.70h.9M611.70 440.70h.9M613.25 440.70h.9M614.80 440.70h.9M616.35 440.70h.9M617.90 440.70h.9M619.45 440.70h.9M621.00 440.70h.9M622.55 440.70h.9M624.10 440.70h.9M625.65 440.70h.9M627.20 440.70h.9M628.75 440.70h.9M630.30 440.70h.9M631.85 440.70h.9M633.40 440.70h.9M634.95 440.70h.9M636.50 440.70h.9M543.50 442.55h.9M545.05 442.55h.9M546.60 442.55h.9M548.15 442.55h.9M549.70 442.55h.9M551.25 442.55h.9M552.80 442.55h.9M554.35 442.55h.9M555.90 442.55h.9M557.45 442.55h.9M559.00 442.55h.9M560.55 442.55h.9M562.10 442.55h.9M563.65 442.55h.9M565.20 442.55h.9M566.75 442.55h.9M568.30 442.55h.9M569.85 442.55h.9M571.40 442.55h.9M572.95 442.55h.9M574.50 442.55h.9M576.05 442.55h.9M577.60 442.55h.9M579.15 442.55h.9M580.70 442.55h.9M582.25 442.55h.9M583.80 442.55h.9M585.35 442.55h.9M586.90 442.55h.9M588.45 442.55h.9M590.00 442.55h.9M591.55 442.55h.9M593.10 442.55h.9M594.65 442.55h.9M596.20 442.55h.9M597.75 442.55h.9M599.30 442.55h.9M600.85 442.55h.9M602.40 442.55h.9M603.95 442.55h.9M605.50 442.55h.9M607.05 442.55h.9M608.60 442.55h.9M610.15 442.55h.9M611.70 442.55h.9M613.25 442.55h.9M614.80 442.55h.9M616.35 442.55h.9M617.90 442.55h.9M619.45 442.55h.9M621.00 442.55h.9M622.55 442.55h.9M624.10 442.55h.9M625.65 442.55h.9M627.20 442.55h.9M628.75 442.55h.9M630.30 442.55h.9M631.85 442.55h.9M633.40 442.55h.9M634.95 442.55h.9M636.50 442.55h.9M543.50 444.40h.9M545.05 444.40h.9M546.60 444.40h.9M548.15 444.40h.9M549.70 444.40h.9M551.25 444.40h.9M552.80 444.40h.9M554.35 444.40h.9M555.90 444.40h.9M557.45 444.40h.9M559.00 444.40h.9M560.55 444.40h.9M562.10 444.40h.9M563.65 444.40h.9M565.20 444.40h.9M566.75 444.40h.9M568.30 444.40h.9M569.85 444.40h.9M571.40 444.40h.9M572.95 444.40h.9M574.50 444.40h.9M576.05 444.40h.9M577.60 444.40h.9M579.15 444.40h.9M580.70 444.40h.9M582.25 444.40h.9M583.80 444.40h.9M585.35 444.40h.9M586.90 444.40h.9M588.45 444.40h.9M590.00 444.40h.9M591.55 444.40h.9M593.10 444.40h.9M594.65 444.40h.9M596.20 444.40h.9M597.75 444.40h.9M599.30 444.40h.9M600.85 444.40h.9M602.40 444.40h.9M603.95 444.40h.9M605.50 444.40h.9M607.05 444.40h.9M608.60 444.40h.9M610.15 444.40h.9M611.70 444.40h.9M613.25 444.40h.9M614.80 444.40h.9M616.35 444.40h.9M617.90 444.40h.9M619.45 444.40h.9M621.00 444.40h.9M622.55 444.40h.9M624.10 444.40h.9M625.65 444.40h.9M627.20 444.40h.9M628.75 444.40h.9M630.30 444.40h.9M631.85 444.40h.9M633.40 444.40h.9M634.95 444.40h.9M636.50 444.40h.9M543.50 446.25h.9M545.05 446.25h.9M546.60 446.25h.9M548.15 446.25h.9M549.70 446.25h.9M551.25 446.25h.9M552.80 446.25h.9M554.35 446.25h.9M555.90 446.25h.9M557.45 446.25h.9M559.00 446.25h.9M560.55 446.25h.9M562.10 446.25h.9M563.65 446.25h.9M565.20 446.25h.9M566.75 446.25h.9M568.30 446.25h.9M569.85 446.25h.9M571.40 446.25h.9M572.95 446.25h.9M574.50 446.25h.9M576.05 446.25h.9M577.60 446.25h.9M579.15 446.25h.9M580.70 446.25h.9M582.25 446.25h.9M583.80 446.25h.9M585.35 446.25h.9M586.90 446.25h.9M588.45 446.25h.9M590.00 446.25h.9M591.55 446.25h.9M593.10 446.25h.9M594.65 446.25h.9M596.20 446.25h.9M597.75 446.25h.9M599.30 446.25h.9M600.85 446.25h.9M602.40 446.25h.9M603.95 446.25h.9M605.50 446.25h.9M607.05 446.25h.9M608.60 446.25h.9M610.15 446.25h.9M611.70 446.25h.9M613.25 446.25h.9M614.80 446.25h.9M616.35 446.25h.9M617.90 446.25h.9M619.45 446.25h.9M621.00 446.25h.9M622.55 446.25h.9M624.10 446.25h.9M625.65 446.25h.9M627.20 446.25h.9M628.75 446.25h.9M630.30 446.25h.9M631.85 446.25h.9M633.40 446.25h.9M634.95 446.25h.9M636.50 446.25h.9M543.50 448.10h.9M545.05 448.10h.9M546.60 448.10h.9M548.15 448.10h.9M549.70 448.10h.9M551.25 448.10h.9M552.80 448.10h.9M554.35 448.10h.9M555.90 448.10h.9M557.45 448.10h.9M559.00 448.10h.9M560.55 448.10h.9M562.10 448.10h.9M563.65 448.10h.9M565.20 448.10h.9M566.75 448.10h.9M568.30 448.10h.9M569.85 448.10h.9M571.40 448.10h.9M572.95 448.10h.9M574.50 448.10h.9M576.05 448.10h.9M577.60 448.10h.9M579.15 448.10h.9M580.70 448.10h.9M582.25 448.10h.9M583.80 448.10h.9M585.35 448.10h.9M586.90 448.10h.9M588.45 448.10h.9M590.00 448.10h.9M591.55 448.10h.9M593.10 448.10h.9M594.65 448.10h.9M596.20 448.10h.9M597.75 448.10h.9M599.30 448.10h.9M600.85 448.10h.9M602.40 448.10h.9M603.95 448.10h.9M605.50 448.10h.9M607.05 448.10h.9M608.60 448.10h.9M610.15 448.10h.9M611.70 448.10h.9M613.25 448.10h.9M614.80 448.10h.9M616.35 448.10h.9M617.90 448.10h.9M619.45 448.10h.9M621.00 448.10h.9M622.55 448.10h.9M624.10 448.10h.9M625.65 448.10h.9M627.20 448.10h.9M628.75 448.10h.9M630.30 448.10h.9M631.85 448.10h.9M633.40 448.10h.9M634.95 448.10h.9M636.50 448.10h.9M543.50 449.95h.9M545.05 449.95h.9M546.60 449.95h.9M548.15 449.95h.9M549.70 449.95h.9M551.25 449.95h.9M552.80 449.95h.9M554.35 449.95h.9M555.90 449.95h.9M557.45 449.95h.9M559.00 449.95h.9M560.55 449.95h.9M562.10 449.95h.9M563.65 449.95h.9M565.20 449.95h.9M566.75 449.95h.9M568.30 449.95h.9M569.85 449.95h.9M571.40 449.95h.9M572.95 449.95h.9M574.50 449.95h.9M576.05 449.95h.9M577.60 449.95h.9M579.15 449.95h.9M580.70 449.95h.9M582.25 449.95h.9M583.80 449.95h.9M585.35 449.95h.9M586.90 449.95h.9M588.45 449.95h.9M590.00 449.95h.9M591.55 449.95h.9M593.10 449.95h.9M594.65 449.95h.9M596.20 449.95h.9M597.75 449.95h.9M599.30 449.95h.9M600.85 449.95h.9M602.40 449.95h.9M603.95 449.95h.9M605.50 449.95h.9M607.05 449.95h.9M608.60 449.95h.9M610.15 449.95h.9M611.70 449.95h.9M613.25 449.95h.9M614.80 449.95h.9M616.35 449.95h.9M617.90 449.95h.9M619.45 449.95h.9M621.00 449.95h.9M622.55 449.95h.9M624.10 449.95h.9M625.65 449.95h.9M627.20 449.95h.9M628.75 449.95h.9M630.30 449.95h.9M631.85 449.95h.9M633.40 449.95h.9M634.95 449.95h.9M636.50 449.95h.9M543.50 451.80h.9M545.05 451.80h.9M546.60 451.80h.9M548.15 451.80h.9M549.70 451.80h.9M551.25 451.80h.9M552.80 451.80h.9M554.35 451.80h.9M555.90 451.80h.9M557.45 451.80h.9M559.00 451.80h.9M560.55 451.80h.9M562.10 451.80h.9M563.65 451.80h.9M565.20 451.80h.9M566.75 451.80h.9M568.30 451.80h.9M569.85 451.80h.9M571.40 451.80h.9M572.95 451.80h.9M574.50 451.80h.9M576.05 451.80h.9M577.60 451.80h.9M579.15 451.80h.9M580.70 451.80h.9M582.25 451.80h.9M583.80 451.80h.9M585.35 451.80h.9M586.90 451.80h.9M588.45 451.80h.9M590.00 451.80h.9M591.55 451.80h.9M593.10 451.80h.9M594.65 451.80h.9M596.20 451.80h.9M597.75 451.80h.9M599.30 451.80h.9M600.85 451.80h.9M602.40 451.80h.9M603.95 451.80h.9M605.50 451.80h.9M607.05 451.80h.9M608.60 451.80h.9M610.15 451.80h.9M611.70 451.80h.9M613.25 451.80h.9M614.80 451.80h.9M616.35 451.80h.9M617.90 451.80h.9M619.45 451.80h.9M621.00 451.80h.9M622.55 451.80h.9M624.10 451.80h.9M625.65 451.80h.9M627.20 451.80h.9M628.75 451.80h.9M630.30 451.80h.9M631.85 451.80h.9M633.40 451.80h.9M634.95 451.80h.9M636.50 451.80h.9" stroke="#14300a" stroke-width="1" fill="none" opacity=".7"/><path d="M545.15 439.80h1.150M546.70 439.80h1.150M548.25 439.80h1.150M543.60 441.65h1.150M549.80 441.65h1.150M543.60 443.50h1.150M548.25 443.50h1.150M549.80 443.50h1.150M543.60 445.35h1.150M546.70 445.35h1.150M549.80 445.35h1.150M543.60 447.20h1.150M545.15 447.20h1.150M549.80 447.20h1.150M543.60 449.05h1.150M549.80 449.05h1.150M545.15 450.90h1.150M546.70 450.90h1.150M548.25 450.90h1.150M555.55 439.80h1.150M557.10 439.80h1.150M558.65 439.80h1.150M554.00 441.65h1.150M560.20 441.65h1.150M554.00 443.50h1.150M558.65 443.50h1.150M560.20 443.50h1.150M554.00 445.35h1.150M557.10 445.35h1.150M560.20 445.35h1.150M554.00 447.20h1.150M555.55 447.20h1.150M560.20 447.20h1.150M554.00 449.05h1.150M560.20 449.05h1.150M555.55 450.90h1.150M557.10 450.90h1.150M558.65 450.90h1.150M577.45 439.80h1.150M579.00 439.80h1.150M580.55 439.80h1.150M575.90 441.65h1.150M582.10 441.65h1.150M575.90 443.50h1.150M580.55 443.50h1.150M582.10 443.50h1.150M575.90 445.35h1.150M579.00 445.35h1.150M582.10 445.35h1.150M575.90 447.20h1.150M577.45 447.20h1.150M582.10 447.20h1.150M575.90 449.05h1.150M582.10 449.05h1.150M577.45 450.90h1.150M579.00 450.90h1.150M580.55 450.90h1.150M587.85 439.80h1.150M589.40 439.80h1.150M590.95 439.80h1.150M586.30 441.65h1.150M592.50 441.65h1.150M586.30 443.50h1.150M590.95 443.50h1.150M592.50 443.50h1.150M586.30 445.35h1.150M589.40 445.35h1.150M592.50 445.35h1.150M586.30 447.20h1.150M587.85 447.20h1.150M592.50 447.20h1.150M586.30 449.05h1.150M592.50 449.05h1.150M587.85 450.90h1.150M589.40 450.90h1.150M590.95 450.90h1.150M610.15 439.80h1.150M611.70 439.80h1.150M613.25 439.80h1.150M608.60 441.65h1.150M614.80 441.65h1.150M608.60 443.50h1.150M613.25 443.50h1.150M614.80 443.50h1.150M608.60 445.35h1.150M611.70 445.35h1.150M614.80 445.35h1.150M608.60 447.20h1.150M610.15 447.20h1.150M614.80 447.20h1.150M608.60 449.05h1.150M614.80 449.05h1.150M610.15 450.90h1.150M611.70 450.90h1.150M613.25 450.90h1.150M620.55 439.80h1.150M622.10 439.80h1.150M623.65 439.80h1.150M619.00 441.65h1.150M625.20 441.65h1.150M619.00 443.50h1.150M623.65 443.50h1.150M625.20 443.50h1.150M619.00 445.35h1.150M622.10 445.35h1.150M625.20 445.35h1.150M619.00 447.20h1.150M620.55 447.20h1.150M625.20 447.20h1.150M619.00 449.05h1.150M625.20 449.05h1.150M620.55 450.90h1.150M622.10 450.90h1.150M623.65 450.90h1.150M568.90 443.50h1.150M568.90 449.05h1.150M601.30 443.50h1.150M601.30 449.05h1.150" stroke="#a89a14" stroke-width="1.250" fill="none"/></svg>
<!-- TEXTS -->
<div class="t" style="left:27.00px;top:6px;font-size:11.5px;color:#9a9a9a;transform:scaleX(0.8768);">Victoria 5.37 HDD/SSD | Device 3</div>
<div class="t" style="left:4.50px;top:27px;font-size:10.8px;color:#9a9a9a;transform:scaleX(1.0064);">Menu</div>
<div class="t" style="left:63.80px;top:27px;font-size:10.8px;color:#9a9a9a;transform:scaleX(0.8996);">Service</div>
<div class="t" style="left:138.50px;top:27px;font-size:10.8px;color:#9a9a9a;">Actions</div>
<div class="t" style="left:214.00px;top:27px;font-size:10.8px;color:#9a9a9a;transform:scaleX(0.9571);">Language</div>
<div class="t" style="left:300.00px;top:27px;font-size:10.8px;color:#9a9a9a;transform:scaleX(0.9355);">Settings</div>
<div class="t" style="left:539.50px;top:27px;font-size:10.8px;color:#9a9a9a;transform:scaleX(0.9451);">Help</div>
<div class="t" style="left:626.50px;top:27px;font-size:10.8px;color:#9a9a9a;transform:scaleX(0.9337);">View Buffer Live</div>
<div class="t" style="left:50.00px;top:46px;font-size:11.3px;color:#00d8e8;transform:scaleX(0.9378);">WALRAM 512G</div>
<div class="t" style="left:190.60px;top:46px;font-size:11.3px;color:#ffffff;transform:scaleX(0.9775);">SN: SCRW2309210500071</div>
<div class="t" style="left:340.50px;top:46px;font-size:11.3px;color:#ffffff;font-weight:bold;transform:scaleX(0.9567);">x</div>
<div class="t" style="left:380.00px;top:46px;font-size:11.3px;color:#20d828;transform:scaleX(1.0137);">Fw: V052380</div>
<div class="t" style="left:527.50px;top:46px;font-size:11.3px;color:#e8e820;transform:scaleX(0.9763);">1000215216 LBA (512 GB)</div>
<div class="t" style="left:4.00px;top:97px;font-size:11px;color:#000;">Drive Info</div>
<div class="t" style="left:75.00px;top:97px;font-size:11px;color:#000;transform:scaleX(0.9658);">S.M.A.R.T</div>
<div class="t" style="left:145.00px;top:97px;font-size:11px;color:#8a8a8a;transform:scaleX(0.9383);">SMART Logs</div>
<div class="t" style="left:221.20px;top:97px;font-size:11px;color:#000;transform:scaleX(0.9844);">Test &amp; Repair</div>
<div class="t" style="left:302.50px;top:97px;font-size:11px;color:#000;transform:scaleX(0.9364);">Disk Editor</div>
<div class="t" style="left:599.00px;top:97px;font-size:11px;color:#000;transform:scaleX(0.9139);">Pause</div>
<div class="t" style="left:660.00px;top:97px;font-size:11px;color:#000;transform:scaleX(0.9903);">Break All</div>
<div class="t" style="left:4.30px;top:119px;font-size:9.5px;color:#fff2b4;transform:scaleX(0.8444);background:#000;padding-right:2px;padding-left:1.500px;margin-left:-1.500px;">3266 (MB/s)</div>
<div class="t" style="left:4.30px;top:167px;font-size:9.5px;color:#fff2b4;transform:scaleX(0.8137);background:#000;padding-right:2px;padding-left:1.500px;margin-left:-1.500px;">2799</div>
<div class="t" style="left:4.30px;top:216px;font-size:9.5px;color:#fff2b4;transform:scaleX(0.8137);background:#000;padding-right:2px;padding-left:1.500px;margin-left:-1.500px;">2333</div>
<div class="t" style="left:4.30px;top:264px;font-size:9.5px;color:#fff2b4;transform:scaleX(0.8137);background:#000;padding-right:2px;padding-left:1.500px;margin-left:-1.500px;">1866</div>
<div class="t" style="left:4.30px;top:312px;font-size:9.5px;color:#fff2b4;transform:scaleX(0.8137);background:#000;padding-right:2px;padding-left:1.500px;margin-left:-1.500px;">1399</div>
<div class="t" style="left:4.30px;top:360px;font-size:9.5px;color:#fff2b4;transform:scaleX(0.8080);background:#000;padding-right:2px;padding-left:1.500px;margin-left:-1.500px;">933</div>
<div class="t" style="left:4.30px;top:409px;font-size:9.5px;color:#fff2b4;transform:scaleX(0.8080);background:#000;padding-right:2px;padding-left:1.500px;margin-left:-1.500px;">466</div>
<div class="t" style="left:3.30px;top:444px;font-size:9.5px;color:#fff2b4;transform:scaleX(0.7018);">0</div>
<div class="t" style="left:45.00px;top:444px;font-size:9.5px;color:#fff2b4;transform:scaleX(0.8354);background:#000;">68G</div>
<div class="t" style="left:96.10px;top:444px;font-size:9.5px;color:#fff2b4;transform:scaleX(0.7957);background:#000;">137G</div>
<div class="t" style="left:145.20px;top:444px;font-size:9.5px;color:#fff2b4;transform:scaleX(0.8387);background:#000;">205G</div>
<div class="t" style="left:195.30px;top:444px;font-size:9.5px;color:#fff2b4;transform:scaleX(0.8387);background:#000;">273G</div>
<div class="t" style="left:245.40px;top:444px;font-size:9.5px;color:#fff2b4;transform:scaleX(0.8387);background:#000;">341G</div>
<div class="t" style="left:295.50px;top:444px;font-size:9.5px;color:#fff2b4;transform:scaleX(0.8387);background:#000;">410G</div>
<div class="t" style="left:345.60px;top:444px;font-size:9.5px;color:#fff2b4;transform:scaleX(0.8387);background:#000;">478G</div>
<div class="t" style="left:175.80px;top:419px;font-size:9px;color:#00ccd6;transform:scaleX(0.9608);">Max speed = 2504 MB/s</div>
<div class="t" style="left:48.60px;top:140px;font-size:11.5px;color:#d6dae6;font-weight:bold;transform:scaleX(1.0176);">Full scan, sequential access</div>
<div class="t" style="left:49.30px;top:154px;font-size:11px;color:#e0e000;transform:scaleX(0.9377);">WALRAM 512G</div>
<div class="t" style="left:304.00px;top:123px;font-size:9.7px;color:#e0f0d4;font-weight:bold;transform:scaleX(1.1221);">Data recovery</div>
<div class="t" style="left:304.06px;top:135px;font-size:11.5px;color:#e0f0d4;font-weight:bold;transform:scaleX(1.0689);">www.hdd.by</div>
<div class="t" style="left:327.70px;top:161px;font-size:12.5px;color:#08e808;transform:scaleX(0.8435);">Read</div>
<div class="t" style="left:325.70px;top:179px;font-size:12.5px;color:#e0a070;transform:scaleX(0.9400);">Write</div>
<div class="t" style="left:389.30px;top:123px;font-size:9.5px;color:#060620;transform:scaleX(0.9720);">[ End time ]</div>
<div class="t" style="left:388.90px;top:140px;font-size:11px;color:#808080;transform:scaleX(1.0172);">12:00</div>
<div class="t" style="left:404.30px;top:162px;font-size:11px;color:#808080;transform:scaleX(0.9533);">Timer</div>
<div class="t" style="left:447.40px;top:123px;font-size:9.5px;color:#060620;transform:scaleX(0.9427);">[Start LBA]</div>
<div class="t" style="left:500.00px;top:124px;font-size:8px;color:#060620;transform:scaleX(0.7555);">CUR</div>
<div class="t" style="left:525.00px;top:124px;font-size:8px;color:#060620;transform:scaleX(0.9685);">0</div>
<div class="t" style="left:450.00px;top:138px;font-size:11px;color:#000080;font-weight:bold;transform:scaleX(1.1302);">0</div>
<div class="t" style="left:450.00px;top:161px;font-size:11px;color:#808080;transform:scaleX(1.1302);">0</div>
<div class="t" style="left:543.90px;top:123px;font-size:9.5px;color:#060620;transform:scaleX(0.9609);">[End LBA]</div>
<div class="t" style="left:594.30px;top:124px;font-size:8px;color:#060620;transform:scaleX(0.7901);">CUR</div>
<div class="t" style="left:617.10px;top:124px;font-size:8px;color:#060620;transform:scaleX(1.0727);">MAX</div>
<div class="t" style="left:547.40px;top:138px;font-size:11px;color:#000080;font-weight:bold;transform:scaleX(1.1440);">1000215215</div>
<div class="t" style="left:547.40px;top:161px;font-size:11px;color:#8b0000;font-weight:bold;transform:scaleX(1.1440);">1000215215</div>
<div class="t" style="left:521.70px;top:181px;font-size:9.5px;color:#060620;transform:scaleX(0.9642);">[ block size ]</div>
<div class="t" style="left:521.70px;top:193px;font-size:9.5px;color:#060620;transform:scaleX(1.0087);">[ auto ]</div>
<div class="t" style="left:521.70px;top:210px;font-size:9.5px;color:#060620;transform:scaleX(0.9522);">[ timeout,ms ]</div>
<div class="t" style="left:581.00px;top:185px;font-size:11px;color:#060620;transform:scaleX(0.9712);">16384</div>
<div class="t" style="left:581.00px;top:207px;font-size:11px;color:#060620;transform:scaleX(0.9712);">10000</div>
<div class="t" style="left:523.90px;top:232px;font-size:11px;color:#000;font-weight:bold;transform:scaleX(1.1118);">End of test</div>
<div class="t" style="left:395.70px;top:198px;font-size:11px;color:#1010ff;font-weight:bold;transform:scaleX(0.9243);">Scan</div>
<div class="t" style="left:400.70px;top:231px;font-size:10px;color:#101090;font-weight:bold;transform:scaleX(0.9092);">QUICK</div>
<div class="t" style="left:670.00px;top:123px;font-size:11px;color:#7c7c7c;transform:scaleX(0.9528);">API</div>
<div class="t" style="left:670.00px;top:143px;font-size:11px;color:#7c7c7c;transform:scaleX(0.8972);">PIO</div>
<div class="t" style="left:661.70px;top:199px;font-size:11.5px;color:#060620;transform:scaleX(0.9622);">Sleep</div>
<div class="t" style="left:660.60px;top:254px;font-size:11.5px;color:#060620;transform:scaleX(0.9478);">Recall</div>
<div class="t" style="left:661.70px;top:421px;font-size:11.5px;color:#060620;transform:scaleX(0.9134);">Passp</div>
<div class="t" style="left:654.50px;top:357px;font-size:8px;color:#bdbdbd;font-weight:bold;transform:scaleX(1.0886);">WR</div>
<div class="t" style="left:580.00px;top:364px;font-size:11.5px;color:#111;font-weight:bold;transform:scaleX(0.8553);">?</div>
<div class="t" style="left:684.00px;top:357px;font-size:8px;color:#bdbdbd;font-weight:bold;transform:scaleX(1.2111);">RD</div>
<div class="t" style="left:391.90px;top:273px;font-size:10px;color:#2a94a4;transform:scaleX(1.0517);">40</div>
<div class="t" style="left:418.60px;top:273px;font-size:10px;color:#060620;transform:scaleX(1.1043);">61050</div>
<div class="t" style="left:386.00px;top:300px;font-size:10px;color:#2a94a4;transform:scaleX(1.0555);">160</div>
<div class="t" style="left:418.60px;top:300px;font-size:10px;color:#060620;transform:scaleX(1.0270);">0</div>
<div class="t" style="left:385.50px;top:328px;font-size:10px;color:#2a94a4;transform:scaleX(1.0855);">400</div>
<div class="t" style="left:418.60px;top:328px;font-size:10px;color:#060620;transform:scaleX(1.0270);">0</div>
<div class="t" style="left:383.60px;top:356px;font-size:10px;color:#2a94a4;transform:scaleX(1.0582);">1.6s</div>
<div class="t" style="left:418.60px;top:356px;font-size:10px;color:#060620;transform:scaleX(1.0270);">0</div>
<div class="t" style="left:383.00px;top:384px;font-size:10px;color:#2a94a4;transform:scaleX(1.0899);">4.8s</div>
<div class="t" style="left:418.60px;top:384px;font-size:10px;color:#060620;transform:scaleX(1.0270);">0</div>
<div class="t" style="left:390.00px;top:411px;font-size:10px;color:#2a94a4;transform:scaleX(1.0940);">&gt;</div>
<div class="t" style="left:418.60px;top:411px;font-size:10px;color:#060620;transform:scaleX(1.0270);">0</div>
<div class="t" style="left:387.90px;top:435px;font-size:11px;color:#2a94a4;transform:scaleX(0.9551);">Err</div>
<div class="t" style="left:418.60px;top:435px;font-size:11px;color:#f01020;transform:scaleX(0.9337);">0</div>
<div class="t" style="left:407.00px;top:435px;font-size:11px;color:#fff;font-weight:bold;transform:scaleX(0.9828);">x</div>
<div class="t" style="left:496.40px;top:266px;font-size:11px;color:#00e0f0;font-weight:bold;transform:scaleX(1.0618);">512.10 GB</div>
<div class="t" style="left:497.10px;top:292px;font-size:11px;color:#30d858;font-weight:bold;transform:scaleX(1.1483);">2249 MB/s</div>
<div class="t" style="left:585.40px;top:266px;font-size:12.5px;color:#fff;transform:scaleX(0.9883);">100</div>
<div class="t" style="left:620.00px;top:266px;font-size:12.5px;color:#fff;transform:scaleX(1.1596);">%</div>
<div class="t" style="left:594.30px;top:294px;font-size:11.5px;color:#060620;transform:scaleX(1.0191);">Verify</div>
<div class="t" style="left:594.30px;top:314px;font-size:11.5px;color:#060620;transform:scaleX(0.9351);">Read</div>
<div class="t" style="left:594.30px;top:335px;font-size:11.5px;color:#060620;transform:scaleX(1.0292);">Write</div>
<div class="t" style="left:509.70px;top:319px;font-size:11px;color:#8c8c8c;transform:scaleX(0.9760);">DDD (API)</div>
<div class="t" style="left:513.60px;top:392px;font-size:11px;color:#060620;transform:scaleX(1.0390);">Ignore</div>
<div class="t" style="left:513.60px;top:411px;font-size:11px;color:#060620;transform:scaleX(0.9874);">Remap</div>
<div class="t" style="left:571.70px;top:392px;font-size:11px;color:#060620;transform:scaleX(0.9604);">Erase</div>
<div class="t" style="left:571.70px;top:411px;font-size:11px;color:#060620;">Refresh</div>
<div class="t" style="left:510.30px;top:442px;font-size:11px;color:#000080;font-weight:bold;transform:scaleX(0.9644);">Grid</div>
<div class="t" style="left:7.70px;top:468px;font-size:11px;color:#000;transform:scaleX(1.0835);">11:07:47</div>
<div class="t" style="left:68.30px;top:468px;font-size:11px;color:#000;transform:scaleX(1.0332);">Starting Reading, LBA=0..1000215215, FULL, sequential access, timeout 10000ms</div>
<div class="t" style="left:7.70px;top:486px;font-size:11px;color:#000;transform:scaleX(1.1045);">11:11:26</div>
<div class="t" style="left:68.40px;top:486px;font-size:11px;color:#000;transform:scaleX(1.5729);">***</div>
<div class="t" style="left:93.20px;top:486px;font-size:11px;color:#000;transform:scaleX(1.0472);">Scan results: no warnings, no errors. Last block at 1000215215 (512 GB), time 3 minutes 39 seconds.</div>
<div class="t" style="left:7.70px;top:504px;font-size:11px;color:#000;transform:scaleX(1.1045);">11:11:26</div>
<div class="t" style="left:68.30px;top:504px;font-size:11px;color:#1818f0;transform:scaleX(1.0421);">Speed: Maximum 2504 MB/s. Average 2190 MB/s. Minimum 1877 MB/s. 424 points.</div>
<div class="t" style="left:668.00px;top:470px;font-size:11px;color:#060620;transform:scaleX(0.9743);">Sound</div>
<div class="t" style="left:668.00px;top:491px;font-size:11px;color:#060620;transform:scaleX(0.9580);">Hints</div>
</body>
</html>
